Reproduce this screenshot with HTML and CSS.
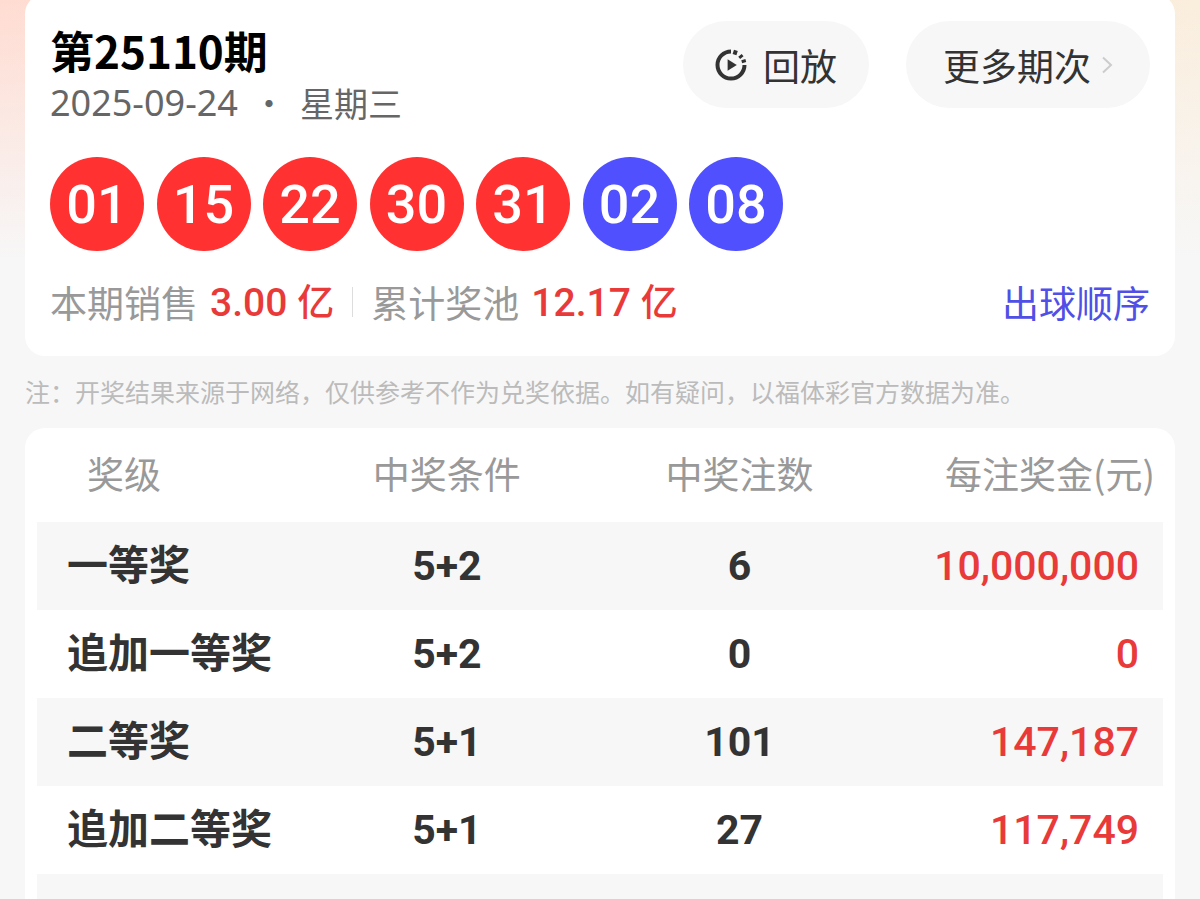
FILE: index.html
```html
<!DOCTYPE html>
<html lang="zh-CN">
<head>
    <meta charset="UTF-8">
    <meta name="viewport" content="width=device-width, initial-scale=1.0">
    <title>第25110期</title>
    <link rel="stylesheet" href="styles.css">
</head>
<body>
    <section class="card draw">
        <header class="draw-head">
            <div class="issue">
                <h1>第25110期</h1>
                <p class="date"><time datetime="2025-09-24">2025-09-24</time><span class="dot">·</span><span>星期三</span></p>
            </div>
            <div class="actions">
                <button class="btn" type="button">
                    <svg class="icon-replay" viewBox="0 0 32 32" aria-hidden="true">
                        <path d="M16 2.5A13.5 13.5 0 1 0 29.5 16" fill="none" stroke="#333" stroke-width="4"/>
                        <path d="M19.5 5.6L20.9 1.4" fill="none" stroke="#333" stroke-width="4"/>
                        <path d="M24.2 8.9L27.6 6.1M26.7 12.7L30.8 11.5" fill="none" stroke="#333" stroke-width="3"/>
                        <path d="M12.6 10.2L21.8 16L12.6 21.8Z" fill="#333"/>
                    </svg>
                    回放
                </button>
                <button class="btn btn-more" type="button">
                    更多期次
                    <svg class="icon-arrow" viewBox="0 0 12 18" aria-hidden="true">
                        <path d="M2 1.5L10 9L2 16.5" fill="none" stroke="#ccc" stroke-width="2"/>
                    </svg>
                </button>
            </div>
        </header>

        <div class="balls">
            <span class="ball">01</span>
            <span class="ball">15</span>
            <span class="ball">22</span>
            <span class="ball">30</span>
            <span class="ball">31</span>
            <span class="ball blue">02</span>
            <span class="ball blue">08</span>
        </div>

        <div class="stats">
            <span>本期销售</span>
            <span class="money"><b>3.00</b>亿</span>
            <span class="divider"></span>
            <span>累计奖池</span>
            <span class="money"><b>12.17</b>亿</span>
            <a class="link" href="#">出球顺序</a>
        </div>
    </section>

    <p class="note">注：开奖结果来源于网络，仅供参考不作为兑奖依据。如有疑问，以福体彩官方数据为准。</p>

    <section class="card prizes">
        <table>
            <thead>
                <tr>
                    <th class="level">奖级</th>
                    <th>中奖条件</th>
                    <th>中奖注数</th>
                    <th class="amount">每注奖金(元)</th>
                </tr>
            </thead>
            <tbody>
                <tr>
                    <td class="level">一等奖</td>
                    <td>5+2</td>
                    <td>6</td>
                    <td class="amount">10,000,000</td>
                </tr>
                <tr>
                    <td class="level">追加一等奖</td>
                    <td>5+2</td>
                    <td>0</td>
                    <td class="amount">0</td>
                </tr>
                <tr>
                    <td class="level">二等奖</td>
                    <td>5+1</td>
                    <td>101</td>
                    <td class="amount">147,187</td>
                </tr>
                <tr>
                    <td class="level">追加二等奖</td>
                    <td>5+1</td>
                    <td>27</td>
                    <td class="amount">117,749</td>
                </tr>
                <tr>
                    <td class="level"></td>
                    <td></td>
                    <td></td>
                    <td class="amount"></td>
                </tr>
            </tbody>
        </table>
    </section>
</body>
</html>
```

FILE: styles.css
```css
* {
    box-sizing: border-box;
}
body {
    margin: 0;
    padding: 0 25px;
    height: 100vh;
    overflow: hidden;
    font-family: "Noto Sans CJK SC", sans-serif;
    color: #333;
    background: linear-gradient(180deg, rgba(247, 247, 247, 0) 0, #f7f7f7 260px), linear-gradient(90deg, #ffdcd2, #faeedd);
}
h1, p {
    margin: 0;
}
.card {
    background: #fff;
    border-radius: 20px;
}
/* The card's top edge is slightly scrolled out of view */
.draw {
    margin-top: -6px;
    padding: 27px 25px 26px;
}
.draw-head {
    display: flex;
    justify-content: space-between;
}
h1 {
    font-size: 44px;
    line-height: 58px;
    color: #000;
}
.date {
    display: flex;
    font-size: 34px;
    line-height: 48px;
    color: #666;
}
.date time {
    font-family: "Noto Sans", sans-serif;
    font-size: 36px;
}
.dot {
    width: 62px;
    text-align: center;
}
.actions {
    display: flex;
    align-items: flex-start;
    gap: 37px;
}
.btn {
    display: flex;
    align-items: center;
    gap: 16px;
    height: 87px;
    padding: 0 32px;
    border: none;
    border-radius: 44px;
    background: #f7f7f7;
    color: #333;
    font-family: inherit;
    font-size: 37px;
    cursor: pointer;
}
.btn-more {
    gap: 10px;
    padding: 0 37px;
}
.icon-replay {
    width: 32px;
    height: 32px;
}
.icon-arrow {
    width: 12px;
    height: 18px;
}
.balls {
    display: flex;
    justify-content: space-between;
    max-width: 733px;
    margin-top: 30px;
}
.ball {
    width: 94px;
    height: 94px;
    border-radius: 50%;
    background: #ff3131;
    color: #fff;
    font-family: Roboto, sans-serif;
    font-size: 54px;
    font-weight: 500;
    line-height: 96px;
    text-align: center;
}
.ball.blue {
    background: #5050ff;
}
.stats {
    display: flex;
    align-items: center;
    margin-top: 22px;
    font-size: 37px;
    line-height: 54px;
    color: #999;
}
.money {
    margin-left: 12px;
    color: #e93a3a;
    font-weight: 500;
}
.money b {
    margin-right: 10px;
    font-family: Roboto, sans-serif;
    font-size: 39px;
    font-weight: 500;
}
.divider {
    width: 1px;
    height: 30px;
    margin: 0 18px;
    background: #ddd;
}
.link {
    margin-left: auto;
    color: #5050e6;
    text-decoration: none;
}
.note {
    padding: 17px 0 19px;
    font-size: 25px;
    line-height: 36px;
    color: #bbb;
}
.prizes {
    padding: 0 12px;
}
table {
    width: 100%;
    table-layout: fixed;
    border-collapse: collapse;
}
th {
    width: 26%;
    height: 94px;
    padding: 0 0 4px;
    font-size: 37px;
    font-weight: 400;
    color: #999;
}
th.level {
    width: 23.4%;
    padding-left: 50px;
    text-align: left;
}
th.amount {
    width: 24.6%;
    padding-right: 8px;
    text-align: right;
}
td {
    height: 88px;
    padding: 0;
    font-family: Roboto, "Noto Sans CJK SC", sans-serif;
    font-size: 41px;
    font-weight: 700;
    line-height: 60px;
    text-align: center;
}
tbody tr:nth-child(odd) {
    background: #f7f7f7;
}
td.level {
    padding-left: 30px;
    text-align: left;
    white-space: nowrap;
}
td.amount {
    padding-right: 24px;
    font-weight: 500;
    text-align: right;
    color: #e93a3a;
}
```
